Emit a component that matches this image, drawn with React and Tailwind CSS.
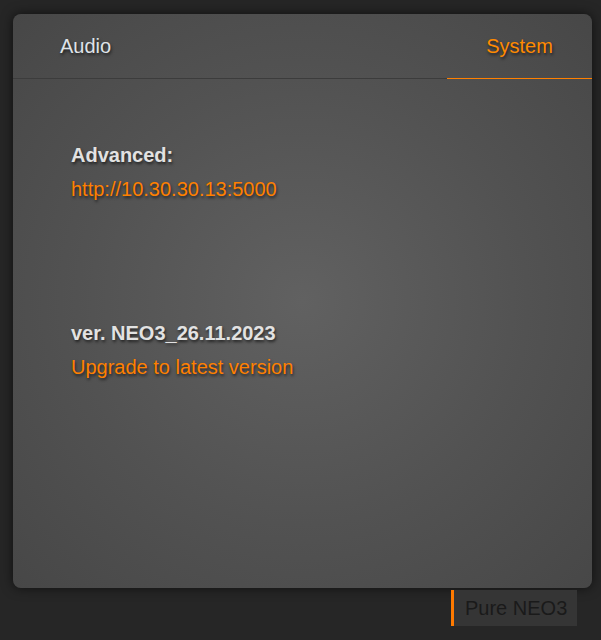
export default function App() {
  const shadow = "[text-shadow:1px_2px_3px_rgba(0,0,0,0.6)]";
  return (
    <div
      className="w-[601px] h-[640px] bg-[#262626] overflow-hidden pt-[14px]"
      style={{ fontFamily: '"Liberation Sans", Arial, sans-serif' }}
    >
      <div className="ml-[13px] w-[579px] h-[574px] rounded-[8px] bg-[radial-gradient(ellipse_at_center,#616161_0%,#525252_55%,#474747_100%)] shadow-[0_0_12px_rgba(0,0,0,0.6)] flex flex-col">
        <div className="flex justify-between h-[65px] border-b border-[#3c3c3c]">
          <div className={`w-[145px] flex items-center justify-center text-[20px] text-[#dfe3e8] ${shadow}`}>
            Audio
          </div>
          <div className={`w-[145px] flex items-center justify-center text-[20px] text-[#ff8a00] border-b border-[#ff8000] -mb-px ${shadow}`}>
            System
          </div>
        </div>
        <div className="pl-[58px] pt-[59px] flex flex-col gap-[110px]">
          <div className="flex flex-col leading-[34px] text-[20px]">
            <span className={`font-bold text-[#e2e2e2] ${shadow}`}>Advanced:</span>
            <span className={`text-[#ff8000] ${shadow}`}>http://10.30.30.13:5000</span>
          </div>
          <div className="flex flex-col leading-[34px] text-[20px]">
            <span className={`font-bold text-[#e2e2e2] ${shadow}`}>ver. NEO3_26.11.2023</span>
            <span className={`text-[#ff8000] ${shadow}`}>Upgrade to latest version</span>
          </div>
        </div>
      </div>
      <div className="flex justify-end pr-[24px] mt-[2px]">
        <div className="h-[36px] w-[126px] bg-[#353535] border-l-[3px] border-[#ff7a00] flex items-center pl-[11px] text-[20px] text-[#1a1a1a]">
          Pure NEO3
        </div>
      </div>
    </div>
  );
}
